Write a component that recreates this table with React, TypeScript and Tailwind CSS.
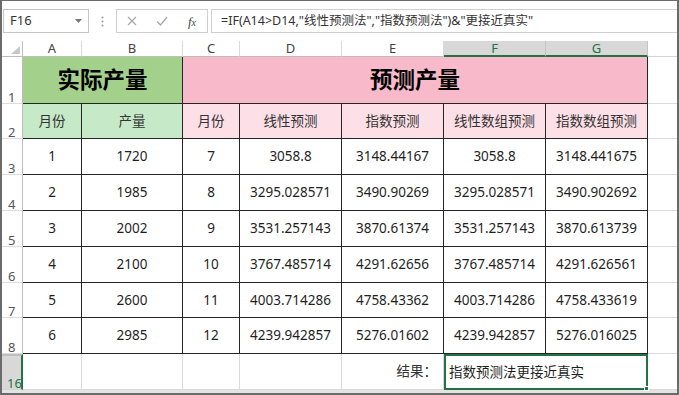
import React from "react";

const FONT = '"Noto Sans", "Noto Sans CJK SC", sans-serif';

const rows: string[][] = [
  ["1", "1720", "7", "3058.8", "3148.44167", "3058.8", "3148.441675"],
  ["2", "1985", "8", "3295.028571", "3490.90269", "3295.028571", "3490.902692"],
  ["3", "2002", "9", "3531.257143", "3870.61374", "3531.257143", "3870.613739"],
  ["4", "2100", "10", "3767.485714", "4291.62656", "3767.485714", "4291.626561"],
  ["5", "2600", "11", "4003.714286", "4758.43362", "4003.714286", "4758.433619"],
  ["6", "2985", "12", "4239.942857", "5276.01602", "4239.942857", "5276.016025"],
];

function RowHead({ n, active }: { n: string; active?: boolean }) {
  return (
    <div
      className={
        active
          ? "flex items-end pl-[5px] bg-[#d8d8d8] text-[#217346] border-r-2 border-r-[#217346] border-b border-b-[#d4d4d4] border-t-2 border-t-[#bdbdbd] text-[13px] leading-[12px]"
          : "flex items-end pl-[6px] bg-white text-[#555] border-r border-r-[#bdbdbd] border-b border-b-[#dcdcdc] text-[13px] leading-[12px]"
      }
    >
      {n}
    </div>
  );
}

function ColHead({ l, active }: { l: string; active?: boolean }) {
  return (
    <div
      className={
        active
          ? "flex items-center justify-center bg-[#d8d8d8] text-[#217346] border-r border-r-[#c4c4c4] border-b-2 border-b-[#217346] text-[13px] leading-none"
          : "flex items-center justify-center bg-white text-[#444] border-r border-r-[#dadada] border-b border-b-[#bdbdbd] text-[13px] leading-none"
      }
    >
      {l}
    </div>
  );
}

export default function App() {
  const cellCls =
    "flex items-center justify-center bg-white border-r border-b border-[#262626] text-[13.5px] text-[#1f1f1f]";
  return (
    <div
      className="w-[679px] h-[395px] bg-white border-t border-l-2 border-r-2 border-b-2 border-[#6b6b6b] flex flex-col overflow-hidden"
      style={{ fontFamily: FONT }}
    >
      {/* formula bar */}
      <div className="h-[40px] flex items-start pt-[8px] bg-white">
        <div className="ml-[1px] w-[86px] h-[24px] border border-[#c6c6c6] bg-white flex items-center justify-between pl-[6px] pr-[6px] text-[13px] text-[#333]">
          <span>F16</span>
          <svg width="7" height="4" viewBox="0 0 7 4">
            <path d="M0 0 L7 0 L3.5 4 Z" fill="#777" />
          </svg>
        </div>
        <div className="w-[27px] h-[24px] flex items-center justify-center">
          <svg width="3" height="11" viewBox="0 0 3 11">
            <circle cx="1.5" cy="1.5" r="1" fill="#9a9a9a" />
            <circle cx="1.5" cy="5.5" r="1" fill="#9a9a9a" />
            <circle cx="1.5" cy="9.5" r="1" fill="#9a9a9a" />
          </svg>
        </div>
        <div className="w-[92px] h-[24px] border border-[#d0d0d0] bg-white grid grid-cols-3 items-center">
          <div className="flex justify-center">
            <svg width="10" height="10" viewBox="0 0 10 10">
              <path d="M1 1 L9 9 M9 1 L1 9" stroke="#a8a8a8" strokeWidth="1.2" />
            </svg>
          </div>
          <div className="flex justify-center">
            <svg width="12" height="10" viewBox="0 0 12 10">
              <path d="M1 5.5 L4.5 9 L11 1" stroke="#a8a8a8" strokeWidth="1.3" fill="none" />
            </svg>
          </div>
          <div className="flex justify-center">
            <span
              className="italic text-[13px] text-[#444] leading-none"
              style={{ fontFamily: '"Liberation Serif", serif' }}
            >
              f<span className="text-[10px]">x</span>
            </span>
          </div>
        </div>
        <div className="ml-[3px] flex-1 h-[24px] border-y border-l border-[#d0d0d0] bg-white flex items-center pl-[9px] text-[12.5px] text-[#333] whitespace-nowrap">
          =IF(A14&gt;D14,"线性预测法","指数预测法")&amp;"更接近真实"
        </div>
      </div>

      {/* sheet grid */}
      <div className="grid grid-cols-[21px_59px_101px_57px_102px_102px_102px_102px_1fr] grid-rows-[16px_47px_35px_36px_36px_36px_36px_35px_36px_36px]">
        {/* header row */}
        <div className="relative bg-white border-r border-r-[#bdbdbd] border-b border-b-[#bdbdbd]">
          <svg className="absolute right-[2px] bottom-[2px]" width="9" height="8" viewBox="0 0 9 8">
            <path d="M9 0 L9 8 L0 8 Z" fill="#c8c8c8" />
          </svg>
        </div>
        <ColHead l="A" />
        <ColHead l="B" />
        <ColHead l="C" />
        <ColHead l="D" />
        <ColHead l="E" />
        <ColHead l="F" active />
        <ColHead l="G" active />
        <div className="bg-white border-b border-b-[#d4d4d4]" />

        {/* row 1 */}
        <RowHead n="1" />
        <div className="col-span-2 flex items-center justify-center bg-[#a3d18c] border-r border-b border-[#262626] text-[22.5px] font-bold text-black">
          实际产量
        </div>
        <div className="col-span-5 flex items-center justify-center bg-[#f8b9ca] border-r border-b border-[#262626] text-[22.5px] font-bold text-black">
          预测产量
        </div>
        <div className="border-b border-[#dadada]" />

        {/* row 2 */}
        <RowHead n="2" />
        {["月份", "产量"].map((t) => (
          <div key={t} className="flex items-center justify-center bg-[#c6e9c8] border-r border-b border-[#262626] text-[13.5px] text-[#333]">
            {t}
          </div>
        ))}
        {["月份", "线性预测", "指数预测", "线性数组预测", "指数数组预测"].map((t, i) => (
          <div key={i} className="flex items-center justify-center bg-[#fde0e7] border-r border-b border-[#262626] text-[13.5px] text-[#333]">
            {t}
          </div>
        ))}
        <div className="border-b border-[#dadada]" />

        {/* data rows */}
        {rows.map((r, ri) => (
          <React.Fragment key={ri}>
            <RowHead n={String(ri + 3)} />
            {r.map((v, ci) => (
              <div key={ci} className={cellCls}>
                {v}
              </div>
            ))}
            <div className="border-b border-[#dadada]" />
          </React.Fragment>
        ))}

        {/* row 16 */}
        <RowHead n="16" active />
        <div className="border-r border-b border-[#dadada]" />
        <div className="border-r border-b border-[#dadada]" />
        <div className="border-r border-b border-[#dadada]" />
        <div className="border-r border-b border-[#dadada]" />
        <div className="flex items-center justify-end pr-[6px] border-r border-b border-[#dadada] text-[13.5px] text-[#333]">
          结果：
        </div>
        <div className="relative col-span-2 flex items-center pl-[3px] border-2 border-[#217346] text-[13.5px] text-[#1f1f1f]">
          指数预测法更接近真实
          <div className="absolute right-[-3px] bottom-[-3px] w-[5px] h-[5px] bg-[#217346] border border-white" />
        </div>
        <div className="border-b border-[#dadada]" />
      </div>
      <div className="flex-1 bg-[#e3e3e3]" />
    </div>
  );
}
